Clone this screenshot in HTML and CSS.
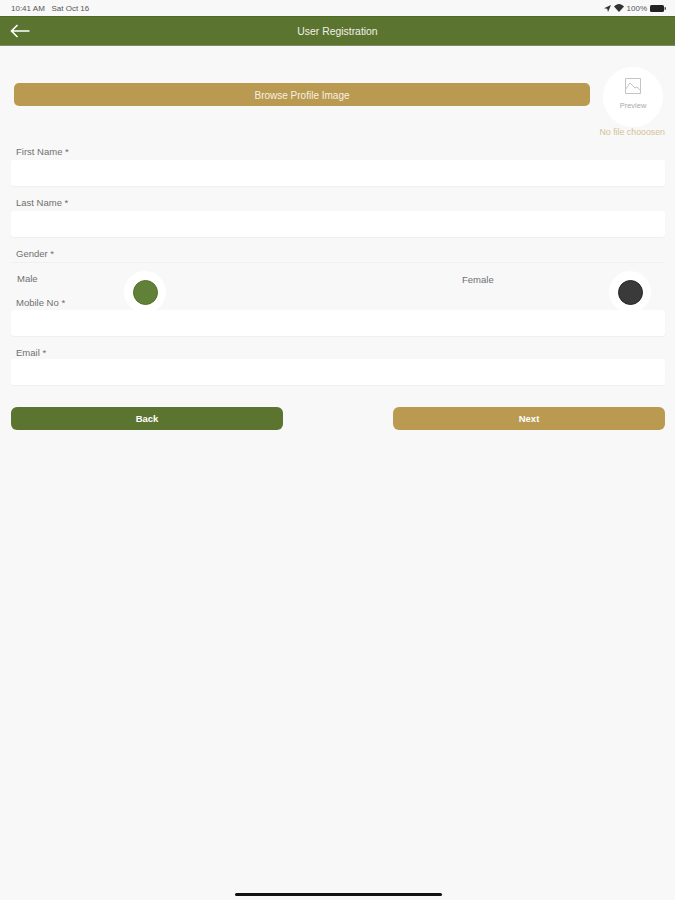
FILE: index.html
```html
<!DOCTYPE html>
<html lang="en">
<head>
<meta charset="utf-8">
<title>User Registration</title>
<link rel="stylesheet" href="styles.css">
</head>
<body>
<div class="status">
  <span>10:41 AM&nbsp;&nbsp; Sat Oct 16</span>
  <div class="status-right">
    <svg class="loc" width="7" height="7" viewBox="0 0 7 7"><path d="M7 0L0 3.2l3.2.6L4 7z" fill="#333"/></svg>
    <svg width="10" height="8" viewBox="0 0 10 8"><path d="M5 8L0 2.6C3-.8 7-.8 10 2.6z" fill="#333"/></svg>
    <span>100%</span>
    <svg width="16" height="7" viewBox="0 0 16 7"><rect width="14" height="7" rx="1.5" fill="#222"/><rect x="14.5" y="2" width="1.5" height="3" rx=".7" fill="#555"/></svg>
  </div>
</div>
<header class="topbar">
  <svg class="back-icon" width="20" height="14" viewBox="0 0 20 14"><path d="M19.5 7H1.5M7.5 1L1.5 7l6 6" fill="none" stroke="#fff" stroke-width="1.6"/></svg>
  <h1>User Registration</h1>
</header>
<main class="form">
  <div class="upload">
    <button class="browse">Browse Profile Image</button>
    <div class="preview-col">
      <div class="preview">
        <svg width="16" height="16" viewBox="0 0 16 16"><path d="M.5.5h15v15H.5z" fill="none" stroke="#c4c4c4"/><path d="M.5 11.5L5 5l5 5 2-1 3.5 3.5" fill="none" stroke="#c4c4c4"/></svg>
        <span>Preview</span>
      </div>
      <span class="nofile">No file chooosen</span>
    </div>
  </div>
  <label class="label first">First Name *</label>
  <div class="input"></div>
  <label class="label">Last Name *</label>
  <div class="input"></div>
  <label class="label gender-label">Gender *</label>
  <div class="gender">
    <div class="option male">
      <span>Male</span>
      <div class="radio-wrap"><div class="radio green"></div></div>
    </div>
    <div class="option female">
      <span>Female</span>
      <div class="radio-wrap"><div class="radio dark"></div></div>
    </div>
  </div>
  <label class="label mobile">Mobile No *</label>
  <div class="input"></div>
  <label class="label email">Email *</label>
  <div class="input"></div>
  <div class="actions">
    <button class="btn back">Back</button>
    <button class="btn next">Next</button>
  </div>
</main>
<div class="home"></div>
</body>
</html>
```
FILE: styles.css
```css
* { box-sizing: border-box; }
html, body { margin: 0; height: 900px; overflow: hidden; }
body {
  position: relative;
  background: #f8f8f8;
  font-family: "Liberation Sans", Arial, sans-serif;
  color: #555;
}
.status {
  height: 16px;
  padding: 0 9px 0 11px;
  display: flex;
  align-items: center;
  justify-content: space-between;
  font-size: 8px;
  color: #555;
}
.status-right { display: flex; align-items: center; gap: 3px; }
.topbar {
  height: 30px;
  background: #5b7430;
  border-top: 1px solid #4f6a22;
  border-bottom: 1px solid #7d8c66;
  display: flex;
  align-items: center;
  justify-content: center;
  position: relative;
}
.back-icon { position: absolute; left: 10px; top: 7px; }
.topbar h1 { margin: 0; font-size: 10.4px; font-weight: 400; color: #f0f0e8; }
.form { padding: 0 10px 0 11px; }
.upload {
  display: flex;
  justify-content: space-between;
  align-items: flex-start;
  padding: 21px 0 0 3px;
}
.browse {
  width: 576px;
  height: 23px;
  margin-top: 16px;
  padding-top: 2px;
  border: 0;
  border-radius: 5px;
  background: #ba9a51;
  color: #f6f1e4;
  font: 10px "Liberation Sans", Arial, sans-serif;
}
.preview-col { display: flex; flex-direction: column; align-items: flex-end; }
.preview {
  width: 60px;
  height: 60px;
  margin-right: 2px;
  border-radius: 50%;
  background: #fff;
  display: flex;
  flex-direction: column;
  align-items: center;
  padding-top: 11px;
  gap: 7px;
  font-size: 7.5px;
  color: #aaa;
}
.nofile { font-size: 8.8px; line-height: 11px; color: #d4c394; }
.label {
  display: block;
  padding-left: 5px;
  font-size: 9.5px;
  line-height: 11px;
  height: 14px;
  color: #707070;
  margin-top: 11px;
}
.label.first { margin-top: 8px; }
.input {
  height: 26px;
  background: #fff;
  border-radius: 3px;
  box-shadow: 0 1px 1px #efefef;
}
.gender-label {
  height: 15px;
  border-bottom: 1px solid #f0f0f0;
}
.gender {
  display: flex;
  height: 25px;
  padding-left: 6px;
  padding-right: 22px;
  justify-content: space-between;
}
.option { display: flex; justify-content: space-between; font-size: 9.5px; padding-top: 10px; line-height: 11px; color: #707070; }
.male { width: 141px; }
.female { width: 181px; padding-top: 11px; }
.radio-wrap {
  width: 42px;
  height: 42px;
  margin: -2px -8px 0 0;
  border-radius: 50%;
  background: #fff;
  display: flex;
  align-items: center;
  justify-content: center;
  position: relative;
}
.female .radio-wrap { margin-top: -3px; }
.radio { width: 25px; height: 25px; border-radius: 50%; border: 1px solid; }
.green { background: #618038; border-color: #537029; }
.dark { background: #3a3a3a; border-color: #262626; }
.label.mobile { margin-top: 9px; height: 13px; position: relative; }
.label.email { height: 12px; }
.actions { display: flex; justify-content: space-between; margin-top: 22px; }
.btn {
  width: 272px;
  height: 23px;
  border: 0;
  border-radius: 6px;
  color: #fff;
  font: 700 9.5px "Liberation Sans", Arial, sans-serif;
}
.back { background: #5b7430; }
.next { background: #ba9a51; }
.home {
  position: absolute;
  left: 235px;
  bottom: 4px;
  width: 207px;
  height: 3px;
  border-radius: 2px;
  background: #111;
}
```
